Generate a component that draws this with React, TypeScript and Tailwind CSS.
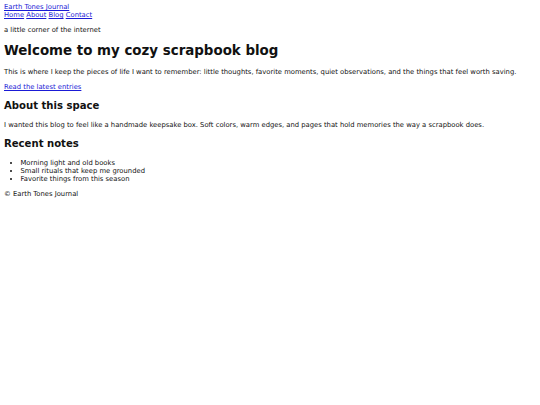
export default function App() {
  return (
    <div className="min-h-[405px] bg-white px-[4px] pt-[3px] text-[6.8px] leading-[1.18] text-[#111]" style={{ fontFamily: '"DejaVu Sans", Verdana, sans-serif' }}>
      <header>
        <a href="#" className="block text-[#1a1ad6] underline">Earth Tones Journal</a>
        <nav>
          <a href="#" className="text-[#1a1ad6] underline">Home</a>{' '}
          <a href="#" className="text-[#1a1ad6] underline">About</a>{' '}
          <a href="#" className="text-[#1a1ad6] underline">Blog</a>{' '}
          <a href="#" className="text-[#1a1ad6] underline">Contact</a>
        </nav>
        <p className="my-[7px]">a little corner of the internet</p>
      </header>

      <main>
        <h1 className="my-[9px] text-[13.4px] font-bold">Welcome to my cozy scrapbook blog</h1>
        <p className="my-[7px]">
          This is where I keep the pieces of life I want to remember: little thoughts, favorite moments, quiet observations, and the things that feel worth saving.
        </p>
        <p className="my-[7px]">
          <a href="#" className="text-[#1a1ad6] underline">Read the latest entries</a>
        </p>

        <h2 className="my-[9px] text-[10.1px] font-bold">About this space</h2>
        <p className="my-[7px]">
          I wanted this blog to feel like a handmade keepsake box. Soft colors, warm edges, and pages that hold memories the way a scrapbook does.
        </p>

        <h2 className="my-[9px] text-[10.1px] font-bold">Recent notes</h2>
        <ul className="my-[7px] list-disc pl-[16.5px]">
          <li>Morning light and old books</li>
          <li>Small rituals that keep me grounded</li>
          <li>Favorite things from this season</li>
        </ul>
      </main>

      <footer>
        <p className="my-[7px]">© Earth Tones Journal</p>
      </footer>
    </div>
  );
}
